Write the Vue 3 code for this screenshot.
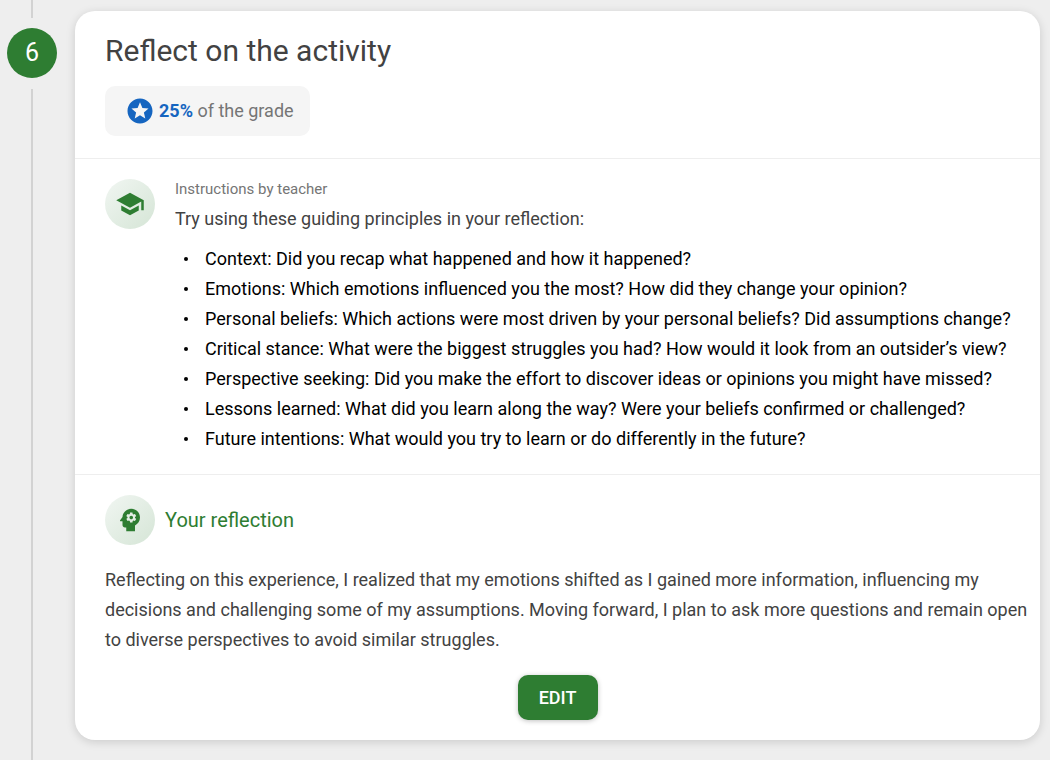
<script setup>
const principles = [
  'Context: Did you recap what happened and how it happened?',
  'Emotions: Which emotions influenced you the most? How did they change your opinion?',
  'Personal beliefs: Which actions were most driven by your personal beliefs? Did assumptions change?',
  'Critical stance: What were the biggest struggles you had? How would it look from an outsider’s view?',
  'Perspective seeking: Did you make the effort to discover ideas or opinions you might have missed?',
  'Lessons learned: What did you learn along the way? Were your beliefs confirmed or challenged?',
  'Future intentions: What would you try to learn or do differently in the future?'
]
</script>

<template>
  <main class="step">
    <aside class="rail">
      <span class="line line-top"></span>
      <span class="number">6</span>
      <span class="line line-rest"></span>
    </aside>
    <article class="card">
      <header class="section head">
        <h1>Reflect on the activity</h1>
        <div class="grade">
          <svg class="star" viewBox="0 0 24 24" aria-hidden="true">
            <path fill="#1565c0" d="M11.99 2C6.47 2 2 6.48 2 12s4.47 10 9.99 10C17.52 22 22 17.52 22 12S17.52 2 11.99 2zm4.24 16L12 15.45 7.77 18l1.12-4.81-3.73-3.23 4.92-.42L12 5l1.92 4.53 4.92.42-3.73 3.23L16.23 18z" />
          </svg>
          <span><strong>25%</strong> of the grade</span>
        </div>
      </header>
      <section class="section instructions">
        <span class="avatar">
          <svg viewBox="0 0 24 24" aria-hidden="true">
            <path fill="#2e7d32" d="M5 13.18v4L12 21l7-3.82v-4L12 17l-7-3.82zM12 3L1 9l11 6 9-4.91V17h2V9L12 3z" />
          </svg>
        </span>
        <div class="guide">
          <p class="by">Instructions by teacher</p>
          <p class="intro">Try using these guiding principles in your reflection:</p>
          <ul>
            <li v-for="item in principles" :key="item">{{ item }}</li>
          </ul>
        </div>
      </section>
      <section class="section reflection">
        <div class="title">
          <span class="avatar">
            <svg viewBox="0 0 24 24" aria-hidden="true">
              <path fill="#2e7d32" d="M13 8.57c-.79 0-1.43.64-1.43 1.43s.64 1.43 1.43 1.43 1.43-.64 1.43-1.43-.64-1.43-1.43-1.43z" />
              <path fill="#2e7d32" d="M13 3C9.25 3 6.2 5.94 6.02 9.64L4.1 12.2c-.25.33-.01.8.4.8H6v3c0 1.1.9 2 2 2h1v3h7v-4.68c2.36-1.12 4-3.53 4-6.32 0-3.87-3.13-7-7-7zm3 7c0 .13-.01.26-.02.39l.83.66c.08.06.1.16.05.25l-.8 1.39c-.05.09-.16.12-.24.09l-.99-.4c-.21.16-.43.29-.67.39L14 13.83c-.01.1-.1.17-.2.17h-1.6c-.1 0-.18-.07-.2-.17l-.15-1.06c-.25-.1-.47-.23-.68-.39l-.99.4c-.09.03-.2 0-.25-.09l-.8-1.39c-.05-.08-.03-.19.05-.25l.84-.66c-.01-.13-.02-.26-.02-.39s.02-.27.04-.39l-.85-.66c-.08-.06-.1-.16-.05-.26l.8-1.38c.05-.09.15-.12.24-.09l1 .4c.2-.15.43-.29.67-.39L12 6.17c.02-.1.1-.17.2-.17h1.6c.1 0 .18.07.2.17l.15 1.06c.24.1.46.23.67.39l1-.4c.09-.03.2 0 .24.09l.8 1.38c.05.09.03.2-.05.26l-.85.66c.03.12.04.25.04.39z" />
            </svg>
          </span>
          <h2>Your reflection</h2>
        </div>
        <p class="answer">Reflecting on this experience, I realized that my emotions shifted as I gained more information, influencing my decisions and challenging some of my assumptions. Moving forward, I plan to ask more questions and remain open to diverse perspectives to avoid similar struggles.</p>
        <button type="button">EDIT</button>
      </section>
    </article>
  </main>
</template>

<style>
body {
  background: #eeeeee;
}
</style>

<style scoped>
.step {
  display: flex;
  min-height: 100vh;
  box-sizing: border-box;
  padding-right: 10px;
  font-family: Roboto, "Liberation Sans", sans-serif;
  font-size: 18px;
  line-height: 30px;
  color: #424242;
}
h1, h2, p, ul {
  margin: 0;
  padding: 0;
  font-weight: 400;
}
.rail {
  display: flex;
  flex: none;
  flex-direction: column;
  align-items: center;
  width: 64px;
  margin-right: 11px;
}
.line {
  width: 2px;
  background: #d2d2d2;
}
.line-top {
  height: 18px;
}
.line-rest {
  flex: 1;
}
.number {
  width: 50px;
  margin: 10px 0 11px;
  border-radius: 50%;
  background: #2e7d32;
  color: #fff;
  font-size: 25px;
  line-height: 50px;
  text-align: center;
}
.card {
  flex: 1;
  min-width: 0;
  margin: 11px 0 20px;
  border-radius: 20px;
  background: #fff;
  box-shadow: 0 2px 10px rgba(0, 0, 0, 0.15);
}
.section {
  padding: 20px 30px;
}
.section + .section {
  border-top: 1px solid #eeeeee;
}
.head {
  padding-bottom: 22px;
}
h1 {
  margin-bottom: 15px;
  font-size: 30px;
  line-height: 40px;
}
.grade {
  display: inline-flex;
  align-items: center;
  gap: 4px;
  height: 50px;
  padding: 0 16px 0 20px;
  border-radius: 10px;
  background: #f5f5f5;
  color: #757575;
  vertical-align: top;
}
.grade strong {
  color: #1565c0;
  font-weight: 700;
}
.star {
  width: 30px;
  height: 30px;
}
.instructions {
  display: flex;
  gap: 20px;
}
.avatar {
  display: flex;
  flex: none;
  align-items: center;
  justify-content: center;
  width: 50px;
  height: 50px;
  border-radius: 50%;
  background: linear-gradient(135deg, #f1f6f2, #d5e5d6);
}
.avatar svg {
  width: 30px;
  height: 30px;
}
.guide {
  flex: 1;
  min-width: 0;
}
.by {
  color: #757575;
  font-size: 15px;
  line-height: 20px;
}
.intro {
  margin: 5px 0 10px;
}
ul,
.answer {
  margin-right: -20px;
}
ul {
  padding-left: 9px;
  color: #000;
  list-style: none;
}
li {
  display: flex;
}
li::before {
  flex: none;
  width: 4px;
  height: 4px;
  margin: 13px 17px 0 0;
  border-radius: 50%;
  background: #000;
  content: "";
}
.title {
  display: flex;
  align-items: center;
  gap: 10px;
  margin-bottom: 20px;
}
h2 {
  color: #2e7d32;
  font-size: 20px;
}
button {
  display: block;
  width: 80px;
  height: 45px;
  margin: 20px auto 0;
  padding: 0;
  border: 0;
  border-radius: 10px;
  background: #2e7d32;
  box-shadow: 0 1px 5px rgba(0, 0, 0, 0.25);
  color: #fff;
  font: 500 18px Roboto, sans-serif;
}
</style>
